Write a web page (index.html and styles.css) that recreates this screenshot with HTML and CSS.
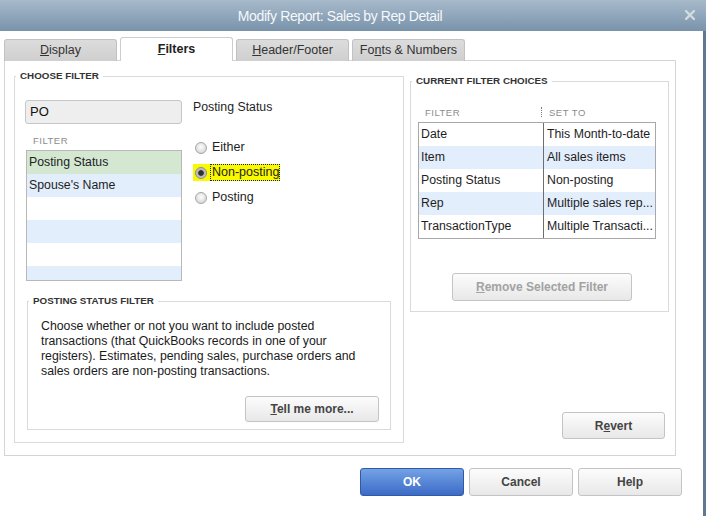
FILE: index.html
```html
<!DOCTYPE html>
<html>
<head>
<meta charset="utf-8">
<title>Modify Report: Sales by Rep Detail</title>
<link rel="stylesheet" href="styles.css">
</head>
<body>
<div class="window">
  <div class="titlebar">
    <div class="title">Modify Report: Sales by Rep Detail</div>
    <div class="close">
      <svg width="10" height="10" viewBox="0 0 10 10"><path d="M1 1 L9 9 M9 1 L1 9" stroke="#d3dae0" stroke-width="2.4" stroke-linecap="square"/></svg>
    </div>
  </div>
  <div class="body">
    <div class="tabs">
      <div class="tab"><u>D</u>isplay</div>
      <div class="tab active"><u>F</u>ilters</div>
      <div class="tab"><u>H</u>eader/Footer</div>
      <div class="tab">Fo<u>n</u>ts &amp; Numbers</div>
    </div>
    <div class="panel">
      <fieldset class="group choose">
        <legend>CHOOSE FILTER</legend>
        <div class="choose-inner">
          <div class="filter-col">
            <div class="search">PO</div>
            <div class="list-head">FILTER</div>
            <div class="list">
              <div class="row sel">Posting Status</div>
              <div class="row alt">Spouse's Name</div>
              <div class="row"></div>
              <div class="row alt"></div>
              <div class="row"></div>
              <div class="row alt"></div>
            </div>
          </div>
          <div class="option-col">
            <div class="opt-title">Posting Status</div>
            <div class="radios">
              <div class="radio"><span class="radio-lab"><span class="dot"></span><span class="txt">Either</span></span></div>
              <div class="radio checked"><span class="radio-lab"><span class="dot"></span><span class="txt">Non-posting</span></span></div>
              <div class="radio"><span class="radio-lab"><span class="dot"></span><span class="txt">Posting</span></span></div>
            </div>
          </div>
        </div>
        <fieldset class="group help">
          <legend>POSTING STATUS FILTER</legend>
          <p class="help-text">Choose whether or not you want to include posted transactions (that QuickBooks records in one of your registers). Estimates, pending sales, purchase orders and sales orders are non-posting transactions.</p>
          <div class="help-actions"><button class="btn tell"><u>T</u>ell me more...</button></div>
        </fieldset>
      </fieldset>
      <div class="right-col">
        <fieldset class="group current">
          <legend>CURRENT FILTER CHOICES</legend>
          <div class="table-head">
            <span class="th th1">FILTER</span><span class="sep"></span><span class="th th2">SET TO</span>
          </div>
          <div class="table">
            <div class="trow"><span class="c1">Date</span><span class="c2">This Month-to-date</span></div>
            <div class="trow alt"><span class="c1">Item</span><span class="c2">All sales items</span></div>
            <div class="trow"><span class="c1">Posting Status</span><span class="c2">Non-posting</span></div>
            <div class="trow alt"><span class="c1">Rep</span><span class="c2">Multiple sales rep...</span></div>
            <div class="trow"><span class="c1">TransactionType</span><span class="c2">Multiple Transacti...</span></div>
          </div>
          <button class="btn remove" disabled><u>R</u>emove Selected Filter</button>
        </fieldset>
        <div class="revert-row"><button class="btn revert">R<u>e</u>vert</button></div>
      </div>
    </div>
    <div class="footer">
      <button class="btn primary">OK</button>
      <button class="btn">Cancel</button>
      <button class="btn">Help</button>
    </div>
  </div>
</div>
</body>
</html>
```
FILE: styles.css
```css
* { box-sizing: border-box; }
html, body {
  margin: 0;
  padding: 0;
  width: 706px;
  height: 516px;
  overflow: hidden;
  background: #fff;
}
body {
  font-family: "Liberation Sans", Arial, sans-serif;
  font-size: 12.3px;
  color: #1e1e1e;
}
u { text-decoration: underline; text-underline-offset: 1px; }

.window {
  width: 706px;
  height: 516px;
  display: flex;
  flex-direction: column;
}

/* title bar */
.titlebar {
  height: 31px;
  flex: none;
  display: flex;
  align-items: center;
  background: linear-gradient(#a7bacb, #7993ab);
}
.title {
  flex: 1;
  text-align: center;
  color: #f6f8fa;
  font-size: 14px;
  letter-spacing: -0.4px;
  padding-top: 1px;
}
.close {
  width: 26px;
  flex: none;
  display: flex;
  padding-left: 5px;
  padding-bottom: 1px;
}
.close svg { display: block; }

.body {
  flex: 1;
  background: #fff;
  border-right: 3px solid #607890;
}

/* tabs */
.tabs {
  display: flex;
  align-items: flex-end;
  gap: 3px;
  height: 24px;
  margin-top: 6px;
  padding-left: 4px;
}
.tab {
  width: 113px;
  height: 22px;
  line-height: 21px;
  text-align: center;
  font-size: 12.5px;
  color: #333;
  background: linear-gradient(#dcdcdc, #cfcfcf);
  border: 1px solid #c2c2c2;
  border-bottom: none;
  border-radius: 3px 3px 0 0;
}
.tab.active {
  height: 24px;
  line-height: 22px;
  background: #fff;
  border-color: #cdcdcd;
  font-weight: bold;
  color: #222;
  position: relative;
  z-index: 2;
}

/* main panel */
.panel {
  margin: -1px 0 0 4px;
  width: 672px;
  height: 396px;
  border: 1px solid #d4d4d4;
  display: flex;
  align-items: flex-start;
  padding: 9px 6px 0 9px;
}

fieldset.group {
  margin: 0;
  padding: 0;
  border: 1px solid #dadada;
  min-width: 0;
}
fieldset.group legend {
  font-size: 9.8px;
  font-weight: bold;
  line-height: 12px;
  color: #333;
  padding: 0 4px;
  margin-left: 1px;
}

fieldset.choose {
  width: 390px;
  height: 373px;
  flex: none;
}
.choose-inner {
  display: flex;
  margin: 18px 0 0 10px;
}
.filter-col {
  width: 157px;
  flex: none;
}
.search {
  height: 24px;
  border: 1px solid #c6c6c6;
  border-radius: 3px;
  background: #eeeeee;
  font-size: 13px;
  line-height: 22px;
  padding-left: 4px;
  color: #111;
}
.list-head {
  height: 26px;
  padding: 8px 0 0 8px;
  line-height: 18px;
  font-size: 9.5px;
  letter-spacing: 0.5px;
  color: #8c8c8c;
}
.list {
  margin-left: 1px;
  width: 156px;
  height: 131px;
  border: 1px solid #b8b8b8;
  overflow: hidden;
}
.row {
  height: 23px;
  line-height: 23px;
  padding-left: 2px;
  white-space: nowrap;
  background: #fff;
}
.row.alt { background: #e3eefc; }
.row.sel { background: #d3e7d1; }

.option-col {
  margin-left: 9px;
  padding-left: 2px;
}
.opt-title {
  line-height: 15px;
}
.radios {
  margin-top: 20px;
}
.radio {
  height: 25px;
  display: flex;
  align-items: center;
}
.radio-lab {
  display: inline-flex;
  align-items: center;
  height: 17px;
  padding-left: 2px;
}
.dot {
  width: 12px;
  height: 12px;
  border-radius: 50%;
  border: 1px solid #a5a5a5;
  background: radial-gradient(circle at 50% 40%, #fdfdfd 0, #dedede 65%, #c9c9c9 100%);
  margin-right: 3px;
  flex: none;
}
.txt {
  border: 1px dotted transparent;
  padding-left: 1px;
  line-height: 15px;
  font-size: 12.5px;
}
.radio.checked .radio-lab { background: #f9f900; }
.radio.checked .txt { border-color: #222; }
.radio.checked .dot {
  background: radial-gradient(circle, #303030 0, #303030 2.4px, #b5b5b5 3.2px, #d6d6d6 100%);
  border-color: #8c8c8c;
}

/* posting status filter help */
fieldset.help {
  width: 364px;
  margin: 14px 0 0 12px;
}
.help-text {
  margin: 12px 12px 0 13px;
  line-height: 15px;
  font-size: 12.3px;
  color: #1a1a1a;
}
.help-actions {
  display: flex;
  justify-content: flex-end;
  margin-top: 17px;
  padding: 0 11px 7px 0;
}

/* buttons */
.btn {
  font-family: "Liberation Sans", Arial, sans-serif;
  font-size: 12px;
  font-weight: bold;
  color: #444;
  background: linear-gradient(#fcfcfc, #e8e8e8);
  border: 1px solid #c4c4c4;
  border-radius: 3px;
  padding: 0;
  height: 28px;
  margin: 0;
}
.tell { width: 134px; height: 26px; }
.remove {
  width: 180px;
  margin: 34px 0 10px 41px;
  color: #a2a2a2;
  display: block;
}
.revert { width: 103px; height: 27px; }
.btn.primary {
  background: linear-gradient(#73a2e6, #3c6bc6);
  border-color: #3159a5;
  color: #fff;
}

/* right column */
.right-col {
  width: 259px;
  margin: 5px 0 0 6px;
  flex: none;
}
fieldset.current { width: 259px; }
.table-head {
  display: flex;
  align-items: center;
  height: 20px;
  margin: 15px 0 0 7px;
  font-size: 9.5px;
  letter-spacing: 0.5px;
  color: #8c8c8c;
}
.th1 { width: 123px; padding-left: 7px; }
.sep {
  width: 1px;
  height: 10px;
  border-left: 1px dotted #777;
}
.th2 { padding-left: 7px; }
.table {
  margin-left: 7px;
  width: 238px;
  border: 1px solid #a8a8a8;
}
.trow {
  display: grid;
  grid-template-columns: 124px 1fr;
  height: 23px;
  line-height: 23px;
  background: #fff;
}
.trow.alt { background: #e3eefc; }
.c1 { padding-left: 2px; white-space: nowrap; overflow: hidden; }
.c2 {
  padding-left: 3px;
  border-left: 1px solid #6e6e6e;
  white-space: nowrap;
  overflow: hidden;
}
.revert-row {
  display: flex;
  justify-content: flex-end;
  margin-top: 100px;
  padding-right: 4px;
}

/* footer */
.footer {
  display: flex;
  justify-content: flex-end;
  gap: 5px;
  padding: 12px 21px 0 0;
}
.footer .btn { width: 104px; }
```
